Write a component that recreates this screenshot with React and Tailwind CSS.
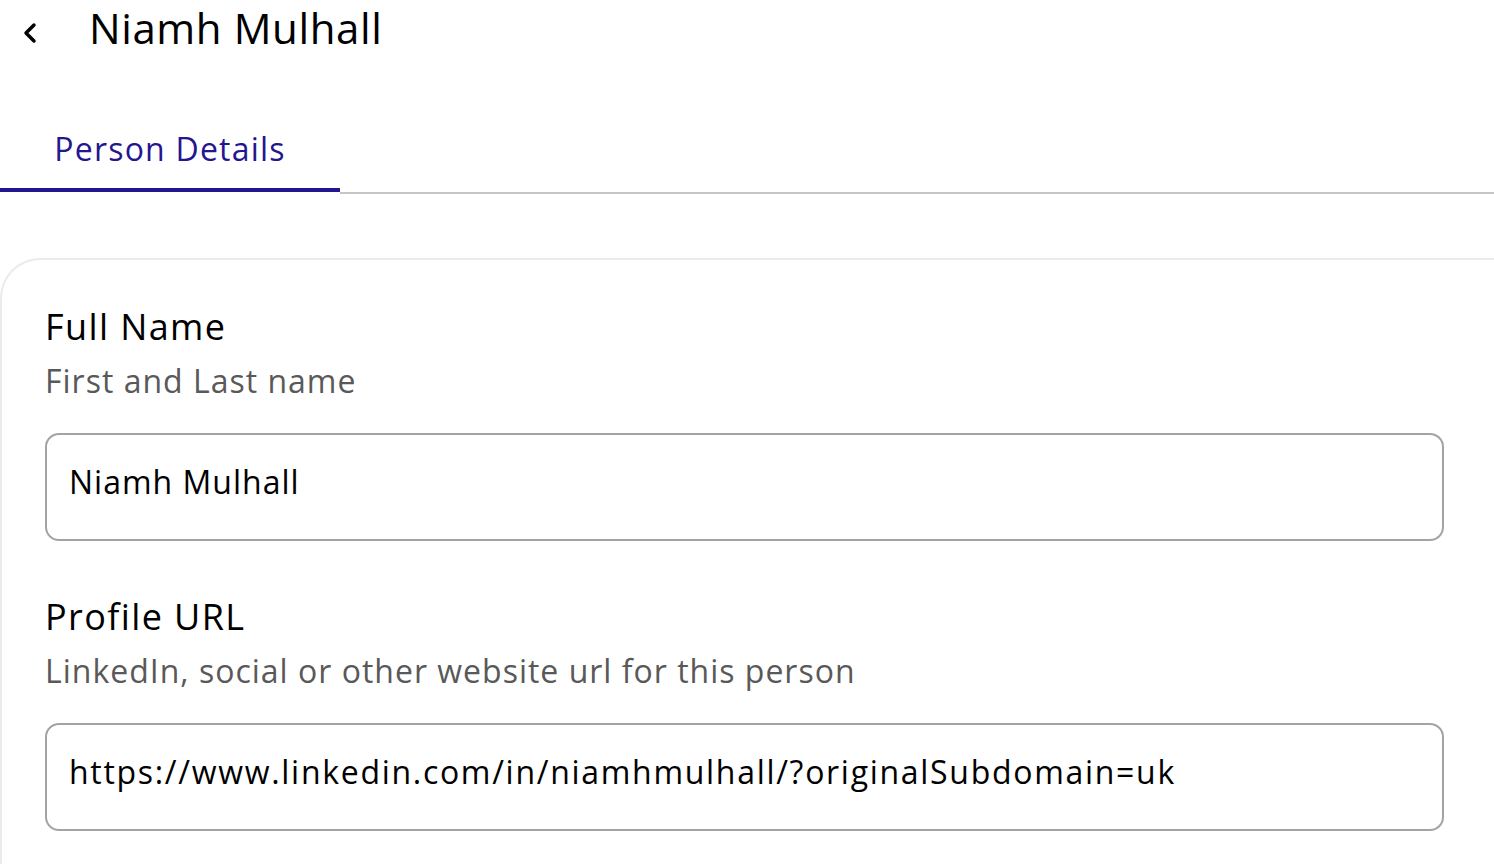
import { ChevronLeft } from 'lucide-react';

function Field({ label, hint, value, valueTracking }) {
    return (
        <div className="flex flex-col">
            <div className="text-[36px] leading-[40px] font-medium text-black tracking-[1.4px]">{label}</div>
            <div className="mt-[14px] text-[32px] leading-[40px] text-[#595959] tracking-[1px]">{hint}</div>
            <div className="mt-[32px] h-[108px] w-[1399px] rounded-[14px] border-2 border-[#a3a3a3] flex items-center pl-[22px]">
                <span className={`text-[32px] leading-[40px] text-black pb-[10px] ${valueTracking}`}>{value}</span>
            </div>
        </div>
    );
}

export default function App() {
    return (
        <div className="min-h-screen bg-white overflow-hidden" style={{ fontFamily: '"Open Sans", "Liberation Sans", sans-serif' }}>
            {/* Header */}
            <div className="h-[56px] flex items-center">
                <div className="w-[89px] flex items-center pl-[14px] pt-[10px]">
                    <ChevronLeft size={32} strokeWidth={2.6} className="text-black" />
                </div>
                <h1 className="text-[42px] leading-none text-black tracking-[0.6px]">Niamh Mulhall</h1>
            </div>

            {/* Tabs */}
            <div className="mt-[54px] flex items-start">
                <div className="w-[340px] h-[82px] border-b-4 border-[#24168f] flex items-center justify-center">
                    <span className="text-[32px] text-[#24168f] tracking-[1.2px]">Person Details</span>
                </div>
                <div className="flex-1 h-[84px] border-b-2 border-[#c6c6c6]"></div>
            </div>

            {/* Card */}
            <div className="mt-[64px] border-t-2 border-l-2 border-[#ebebeb] rounded-tl-[40px] pl-[43px] pt-[47px] pb-10 flex flex-col gap-[56px]">
                <Field label="Full Name" hint="First and Last name" value="Niamh Mulhall" valueTracking="tracking-[1px]" />
                <Field
                    label="Profile URL"
                    hint="LinkedIn, social or other website url for this person"
                    value="https://www.linkedin.com/in/niamhmulhall/?originalSubdomain=uk"
                    valueTracking="tracking-[1.7px]"
                />
            </div>
        </div>
    );
}
